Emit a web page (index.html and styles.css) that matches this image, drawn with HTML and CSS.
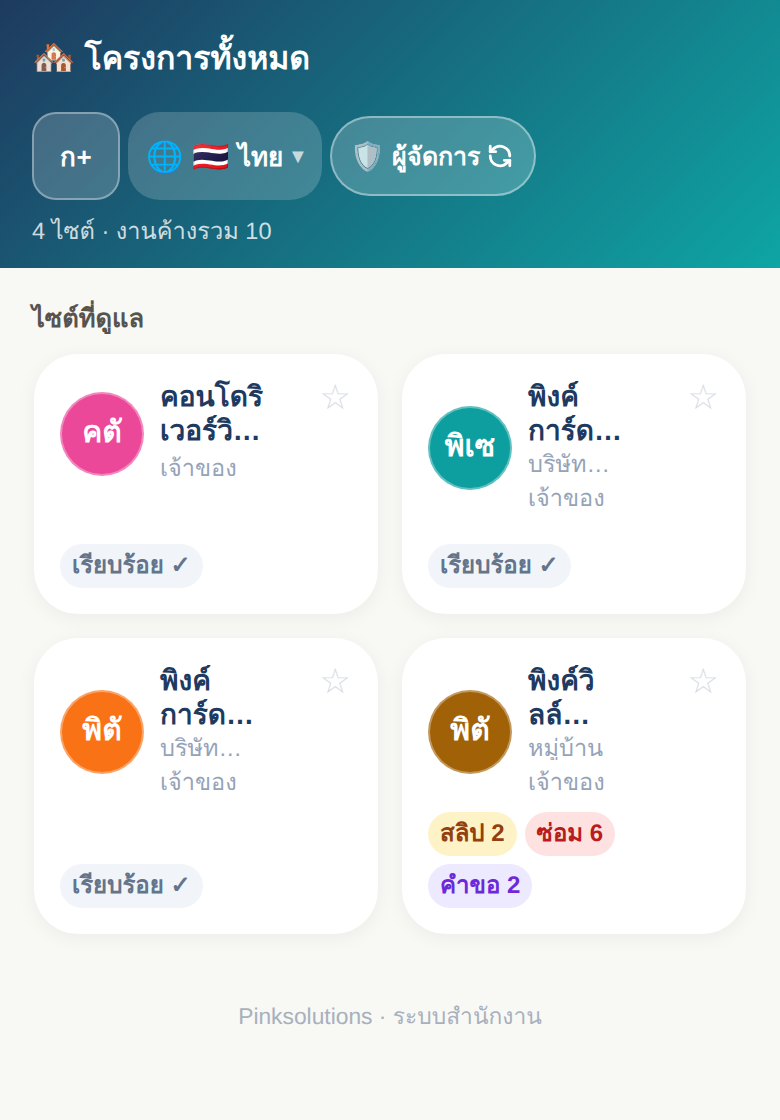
FILE: index.html
```html
<!DOCTYPE html>
<html lang="th">
<head>
    <meta charset="UTF-8">
    <meta name="viewport" content="width=device-width, initial-scale=1.0">
    <title>โครงการทั้งหมด</title>
    <link rel="stylesheet" href="styles.css">
</head>
<body>
    <header class="hero">
        <h1 class="hero-title"><span class="emoji-lg">🏘️</span> โครงการทั้งหมด</h1>
        <div class="hero-actions">
            <button class="font-btn">ก+</button>
            <button class="lang-btn"><span class="emoji">🌐</span> <span class="emoji">🇹🇭</span> ไทย <span class="caret">▼</span></button>
            <button class="role-btn"><span class="emoji-sm">🛡️</span> ผู้จัดการ
                <svg class="role-icon" viewBox="0 0 24 24" fill="none" stroke="currentColor" stroke-width="2.6" stroke-linecap="round" stroke-linejoin="round">
                    <path d="M21 12a9 9 0 0 0-15.5-6.2L3 8"/>
                    <path d="M3 3v5h5"/>
                    <path d="M3 12a9 9 0 0 0 15.5 6.2L21 16"/>
                    <path d="M16 16h5v5"/>
                </svg>
            </button>
        </div>
        <p class="hero-sub">4 ไซต์ · งานค้างรวม 10</p>
    </header>

    <main class="content">
        <h2 class="section-label">ไซต์ที่ดูแล</h2>
        <div class="site-grid">
            <article class="site-card">
                <div class="site-top">
                    <div class="avatar avatar-pink">คตั</div>
                    <div class="site-info">
                        <div class="site-name">คอนโดริ<br>เวอร์วิ…</div>
                        <div class="site-role">เจ้าของ</div>
                    </div>
                    <span class="star">☆</span>
                </div>
                <div class="tags"><span class="tag tag-ok">เรียบร้อย ✓</span></div>
            </article>

            <article class="site-card">
                <div class="site-top">
                    <div class="avatar avatar-teal">พิเซ</div>
                    <div class="site-info">
                        <div class="site-name">พิงค์<br>การ์ด…</div>
                        <div class="site-type">บริษัท…</div>
                        <div class="site-role">เจ้าของ</div>
                    </div>
                    <span class="star">☆</span>
                </div>
                <div class="tags"><span class="tag tag-ok">เรียบร้อย ✓</span></div>
            </article>

            <article class="site-card">
                <div class="site-top">
                    <div class="avatar avatar-orange">พิตั</div>
                    <div class="site-info">
                        <div class="site-name">พิงค์<br>การ์ด…</div>
                        <div class="site-type">บริษัท…</div>
                        <div class="site-role">เจ้าของ</div>
                    </div>
                    <span class="star">☆</span>
                </div>
                <div class="tags"><span class="tag tag-ok">เรียบร้อย ✓</span></div>
            </article>

            <article class="site-card">
                <div class="site-top">
                    <div class="avatar avatar-brown">พิตั</div>
                    <div class="site-info">
                        <div class="site-name">พิงค์วิ<br>ลล์…</div>
                        <div class="site-type">หมู่บ้าน</div>
                        <div class="site-role">เจ้าของ</div>
                    </div>
                    <span class="star">☆</span>
                </div>
                <div class="tags">
                    <span class="tag tag-slip">สลิป 2</span>
                    <span class="tag tag-fix">ซ่อม 6</span>
                    <span class="tag tag-req">คำขอ 2</span>
                </div>
            </article>
        </div>
        <footer class="page-foot">Pinksolutions · ระบบสำนักงาน</footer>
    </main>
</body>
</html>
```

FILE: styles.css
```css
* {
    box-sizing: border-box;
}
body {
    margin: 0;
    min-height: 1120px;
    background-color: #f8f8f4;
    font-family: "Liberation Sans", "Noto Sans", sans-serif;
    text-rendering: geometricPrecision;
}
button {
    font-family: inherit;
    color: white;
    font-weight: 700;
}
.hero {
    height: 268px;
    padding: 32px 32px 0;
    background: linear-gradient(135deg, #1e3a5f, #0ea5a4);
    color: white;
}
.hero-title {
    margin: 0 0 28px;
    font-size: 32px;
    line-height: 52px;
    font-weight: 700;
}
.emoji-lg {
    font-size: 35px;
}
.hero-actions {
    display: flex;
    align-items: center;
    gap: 8px;
    height: 88px;
}
.font-btn {
    width: 88px;
    height: 88px;
    font-size: 26px;
    border: 2px solid rgba(255,255,255,0.35);
    border-radius: 24px;
    background-color: rgba(255,255,255,0.18);
}
.lang-btn {
    display: flex;
    align-items: center;
    gap: 9px;
    height: 88px;
    padding: 0 14px 0 18px;
    font-size: 26px;
    border: none;
    border-radius: 32px;
    background-color: rgba(255,255,255,0.18);
}
.emoji {
    font-size: 30px;
}
.emoji-sm {
    font-size: 28px;
}
.caret {
    margin-left: -4px;
    font-size: 20px;
    opacity: 0.7;
}
.role-btn {
    display: flex;
    align-items: center;
    gap: 7px;
    height: 80px;
    padding: 0 21px 0 18px;
    font-size: 25px;
    border: 2px solid rgba(255,255,255,0.4);
    border-radius: 40px;
    background-color: rgba(255,255,255,0.2);
}
.role-icon {
    width: 26px;
    height: 26px;
}
.hero-sub {
    margin: 14px 0 0;
    font-size: 23.6px;
    line-height: 36px;
    color: rgba(255,255,255,0.8);
}
.content {
    padding: 28px 34px 0;
}
.section-label {
    margin: 0 0 12px -2px;
    font-size: 25.5px;
    line-height: 46px;
    font-weight: 700;
    color: #57534e;
}
.site-grid {
    display: grid;
    grid-template-columns: 344px 344px;
    gap: 24px;
}
.site-card {
    display: flex;
    flex-direction: column;
    justify-content: space-between;
    gap: 12px;
    min-height: 260px;
    padding: 26px;
    background-color: white;
    border-radius: 44px;
    box-shadow: 0 4px 20px rgba(0,0,0,0.05);
}
.site-top {
    display: flex;
    align-items: center;
    gap: 16px;
}
.avatar {
    flex: none;
    display: flex;
    align-items: center;
    justify-content: center;
    width: 84px;
    height: 84px;
    padding-bottom: 4px;
    border-radius: 50%;
    border: 2px solid rgba(255,255,255,0.35);
    color: white;
    font-size: 30px;
    font-weight: 700;
}
.avatar-pink { background-color: #ec4899; }
.avatar-teal { background-color: #0d9f9f; }
.avatar-orange { background-color: #f97316; }
.avatar-brown { background-color: #a16207; }
.site-info {
    width: 110px;
}
.site-name {
    margin-bottom: 4px;
    font-size: 28px;
    line-height: 34px;
    font-weight: 700;
    color: #1e3a5f;
}
.site-type {
    overflow: hidden;
    margin-bottom: 4px;
    white-space: nowrap;
    font-size: 23.5px;
    line-height: 24px;
    color: #94a3b8;
}
.site-role {
    font-size: 23.5px;
    line-height: 36px;
    color: #94a3b8;
}
.site-name + .site-role {
    margin: -2px 0 2px;
}
.star {
    flex: none;
    align-self: flex-start;
    margin-left: auto;
    margin-right: 1px;
    font-size: 35px;
    line-height: 36px;
    color: #d8dce6;
}
.tags {
    display: flex;
    flex-wrap: wrap;
    gap: 8px;
}
.tag {
    padding: 0 12px;
    border-radius: 22px;
    font-size: 24px;
    line-height: 44px;
    font-weight: 700;
}
.tag-ok { background-color: #f1f5f9; color: #64748b; }
.tag-slip { background-color: #fef3c7; color: #92400e; }
.tag-fix { background-color: #fee2e2; color: #b91c1c; }
.tag-req { background-color: #ede9fe; color: #6d28d9; }
.page-foot {
    margin-top: 64px;
    text-align: center;
    font-size: 22.8px;
    line-height: 36px;
    color: #a8b0bd;
}
```
